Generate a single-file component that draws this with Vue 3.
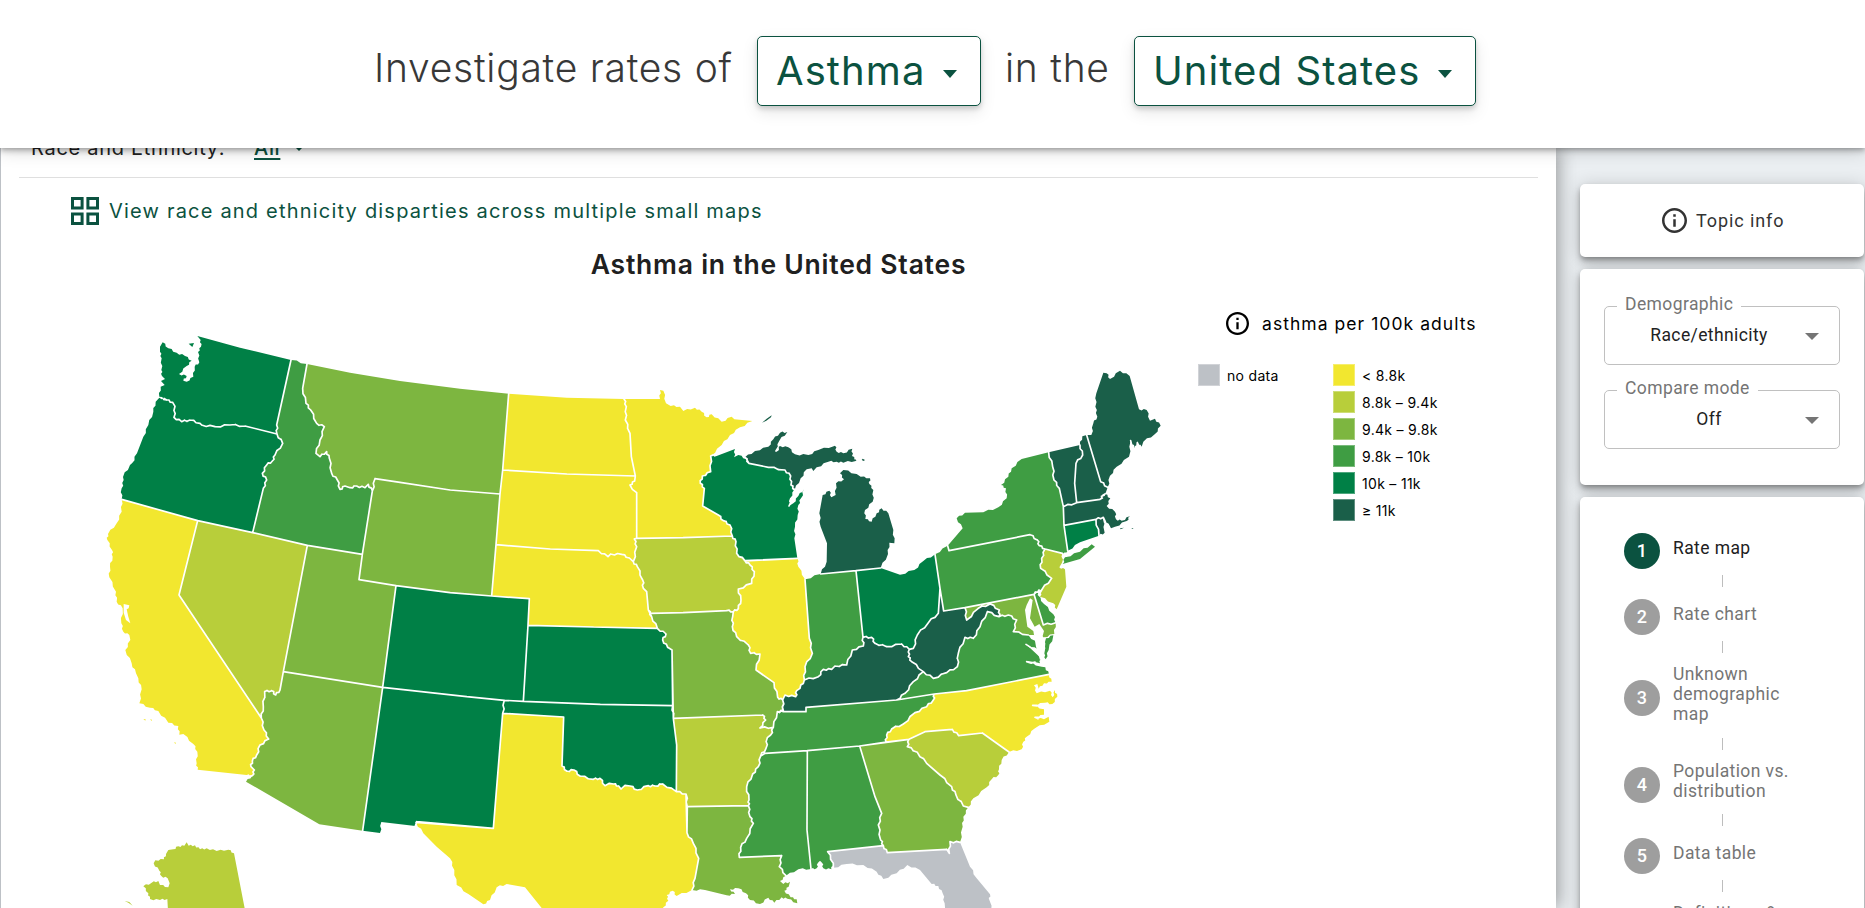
<script setup>
const palette = ['#f2e72f', '#b8ce3a', '#7db640', '#3f9d43', '#008046', '#1a5f49']
const none = '#bdc1c6'

// Outlines use thirds of a pixel as their unit.
const outlines = [
  { id: 'WA', c: 4, d: 'M488 1027 480 1040 480 1055 485 1075 484 1110 486 1128 495 1137 483 1143 494 1155 482 1160 478 1190 500 1200 518 1207 525 1219 522 1252 545 1265 570 1260 600 1270 605 1275 645 1280 690 1275 735 1278 831 1302 830 1275 873 1080 720 1043 592 1008 602 1020 603 1040 594 1056 598 1087 584 1100 580 1130 560 1145 550 1142 560 1128 537 1122 560 1098 575 1082 555 1068 530 1058 505 1045Z' },
  { id: 'OR', c: 4, d: 'M478 1193 500 1200 518 1207 525 1219 522 1252 545 1265 570 1260 600 1270 605 1275 645 1280 690 1275 735 1278 831 1302 848 1330 825 1365 817 1383 800 1395 787 1420 800 1440 790 1465 758 1598 593 1562 365 1498 365 1465 371 1440 369 1431 390 1395 396 1390 411 1360 430 1310 445 1275 460 1235 467 1205Z' },
  { id: 'ID', c: 3, d: 'M873 1080 921 1092 908 1165 918 1210 932 1230 950 1270 973 1280 960 1320 948 1360 960 1370 980 1355 988 1375 995 1420 1012 1440 1020 1468 1035 1458 1050 1463 1070 1458 1095 1463 1105 1453 1117 1473 1087 1663 922 1636 758 1598 790 1465 800 1440 787 1420 800 1395 817 1383 825 1365 848 1330 831 1302 830 1275Z' },
  { id: 'MT', c: 2, d: 'M921 1092 1050 1118 1200 1143 1380 1166 1526 1181 1508 1410 1500 1482 1350 1470 1200 1447 1125 1436 1117 1473 1105 1453 1095 1463 1070 1458 1050 1463 1035 1458 1020 1468 1012 1440 995 1420 988 1375 980 1355 960 1370 948 1360 960 1320 973 1280 950 1270 932 1230 918 1210 908 1165Z' },
  { id: 'WY', c: 2, d: 'M1125 1436 1200 1447 1350 1470 1500 1482 1488 1634 1475 1788 1350 1778 1188 1757 1077 1739 1087 1663 1117 1473Z' },
  { id: 'ND', c: 0, d: 'M1526 1181 1700 1193 1872 1197 1879 1220 1876 1260 1890 1300 1894 1370 1906 1428 1700 1422 1508 1410Z' },
  { id: 'SD', c: 0, d: 'M1508 1410 1700 1422 1906 1428 1904 1443 1890 1455 1897 1468 1910 1478 1910 1615 1903 1617 1910 1640 1900 1685 1888 1674 1865 1663 1832 1662 1824 1670 1795 1652 1650 1647 1488 1634 1500 1482Z' },
  { id: 'NE', c: 0, d: 'M1488 1634 1650 1647 1795 1652 1824 1670 1832 1662 1865 1663 1888 1674 1900 1685 1912 1700 1928 1740 1930 1765 1940 1775 1945 1830 1955 1850 1972 1885 1780 1881 1584 1876 1588 1796 1475 1788Z' },
  { id: 'MN', c: 0, d: 'M1872 1197 1980 1197 1980 1170 1990 1172 1998 1210 2012 1218 2040 1220 2050 1233 2085 1223 2105 1235 2120 1252 2135 1243 2165 1265 2195 1250 2203 1258 2257 1263 2220 1282 2190 1305 2165 1335 2132 1368 2132 1415 2107 1428 2101 1450 2113 1465 2108 1518 2155 1545 2170 1562 2190 1575 2197 1608 2050 1613 1910 1615 1910 1478 1897 1468 1890 1455 1904 1443 1906 1428 1894 1370 1890 1300 1876 1260 1879 1220Z' },
  { id: 'WI', c: 4, d: 'M2132 1368 2150 1368 2205 1347 2202 1372 2215 1365 2240 1378 2247 1390 2305 1402 2355 1410 2372 1428 2373 1455 2384 1468 2370 1495 2367 1518 2380 1510 2395 1488 2413 1466 2403 1495 2395 1515 2393 1545 2385 1580 2383 1615 2392 1675 2235 1683 2210 1660 2208 1625 2197 1608 2190 1575 2170 1562 2155 1545 2108 1518 2113 1465 2101 1450 2107 1428 2132 1415Z' },
  { id: 'MI', c: 5, d: 'M2235 1372 2265 1353 2305 1340 2320 1318 2340 1298 2362 1296 2338 1322 2328 1353 2340 1338 2365 1342 2385 1363 2425 1365 2455 1350 2505 1337 2510 1355 2530 1360 2557 1346 2556 1368 2570 1382 2530 1388 2510 1385 2485 1385 2450 1402 2440 1413 2435 1405 2420 1408 2402 1435 2384 1470 2373 1455 2372 1428 2355 1410 2305 1402 2247 1390Z' },
  { id: 'MI', c: 5, d: 'M2530 1410 2570 1422 2582 1430 2610 1435 2608 1452 2620 1470 2618 1505 2595 1530 2596 1557 2615 1565 2630 1540 2645 1525 2665 1540 2680 1590 2683 1630 2668 1628 2664 1662 2642 1704 2568 1712 2462 1722 2480 1685 2481 1630 2462 1580 2458 1540 2468 1485 2488 1472 2494 1492 2507 1485 2508 1450 2532 1438 2520 1420Z' },
  { id: 'IA', c: 1, d: 'M1910 1615 2050 1613 2197 1608 2208 1625 2210 1660 2235 1682 2250 1695 2263 1715 2255 1750 2215 1767 2223 1800 2215 1826 2200 1835 2180 1832 2050 1838 1950 1840 1945 1830 1940 1775 1930 1765 1928 1740 1912 1700 1900 1685 1910 1640 1903 1617Z' },
  { id: 'IL', c: 0, d: 'M2235 1682 2392 1675 2395 1700 2415 1738 2428 1915 2437 1960 2415 2000 2413 2040 2400 2065 2390 2072 2387 2090 2355 2085 2348 2100 2333 2092 2322 2048 2268 2010 2280 1962 2252 1960 2245 1935 2210 1910 2197 1880 2198 1850 2200 1835 2215 1826 2223 1800 2215 1767 2255 1750 2263 1715 2250 1695Z' },
  { id: 'MO', c: 2, d: 'M1950 1840 2050 1838 2180 1832 2200 1835 2198 1850 2197 1880 2210 1910 2245 1935 2252 1960 2280 1962 2268 2010 2322 2048 2333 2092 2348 2100 2350 2132 2332 2135 2320 2182 2280 2184 2297 2160 2288 2145 2020 2155 2016 1950 2003 1942 1988 1920 1998 1902 1972 1885 1955 1850Z' },
  { id: 'KS', c: 4, d: 'M1584 1876 1780 1881 1972 1885 1998 1902 1988 1920 2003 1942 2016 1950 2018 2117 1800 2113 1570 2104Z' },
  { id: 'CO', c: 4, d: 'M1188 1757 1350 1778 1475 1788 1588 1796 1584 1876 1570 2104 1513 2101 1400 2090 1148 2062Z' },
  { id: 'UT', c: 2, d: 'M922 1636 1087 1663 1077 1739 1188 1757 1148 2062 850 2015Z' },
  { id: 'NV', c: 1, d: 'M593 1562 758 1598 922 1636 850 2015 840 2070 827 2085 815 2072 794 2075 790 2120 784 2154 537 1785Z' },
  { id: 'CA', c: 0, d: 'M365 1498 593 1562 537 1785 784 2154 792 2190 806 2217 780 2235 770 2265 757 2283 753 2300 763 2310 757 2327 740 2325 593 2309 590 2290 592 2255 580 2232 550 2202 538 2204 535 2178 505 2168 475 2133 450 2123 418 2110 425 2068 415 2035 408 2020 395 1990 376 1950 391 1920 388 1905 370 1895 364 1870 368 1825 350 1805 348 1775 328 1732 330 1700 338 1670 336 1650 322 1620 324 1602 350 1570 365 1535Z' },
  { id: 'AZ', c: 2, d: 'M850 2015 1148 2062 1088 2492 958 2473 738 2345 757 2327 763 2310 753 2300 757 2283 770 2265 780 2235 806 2217 792 2190 784 2154 790 2120 794 2075 815 2072 827 2085 840 2070Z' },
  { id: 'NM', c: 4, d: 'M1148 2062 1400 2090 1513 2101 1508 2140 1480 2485 1250 2465 1246 2478 1144 2466 1140 2499 1088 2492Z' },
  { id: 'OK', c: 4, d: 'M1513 2101 1570 2104 1800 2113 2018 2117 2020 2155 2030 2235 2029 2375 1988 2352 1965 2358 1945 2357 1912 2370 1890 2358 1875 2356 1863 2367 1856 2358 1840 2352 1828 2350 1815 2357 1800 2335 1780 2338 1740 2328 1722 2310 1700 2313 1686 2298 1691 2151 1508 2140Z' },
  { id: 'TX', c: 0, d: 'M1508 2140 1691 2151 1686 2298 1700 2313 1722 2310 1740 2328 1780 2338 1800 2335 1815 2357 1828 2350 1840 2352 1856 2358 1863 2367 1875 2356 1890 2358 1912 2370 1945 2357 1965 2358 1988 2352 2029 2375 2058 2382 2061 2498 2080 2530 2096 2575 2085 2635 2076 2670 2030 2688 2018 2672 2000 2685 2005 2702 1990 2722 1985 2750 1640 2750 1625 2724 1575 2662 1520 2652 1490 2662 1470 2700 1450 2713 1405 2682 1370 2655 1363 2610 1350 2575 1310 2540 1270 2500 1248 2467 1480 2485Z' },
  { id: 'AR', c: 1, d: 'M2020 2155 2288 2145 2297 2160 2280 2184 2320 2182 2312 2205 2302 2213 2298 2245 2282 2268 2275 2300 2258 2322 2240 2360 2247 2400 2245 2417 2062 2420 2058 2382 2029 2375 2030 2235Z' },
  { id: 'LA', c: 2, d: 'M2062 2420 2245 2417 2250 2450 2260 2470 2240 2515 2222 2542 2218 2572 2345 2567 2338 2600 2358 2627 2340 2643 2350 2652 2370 2645 2366 2660 2353 2672 2372 2692 2390 2698 2392 2710 2362 2696 2345 2692 2323 2708 2305 2693 2280 2712 2250 2700 2238 2680 2215 2665 2190 2668 2205 2682 2180 2686 2115 2670 2076 2670 2085 2635 2096 2575 2080 2530 2061 2498Z' },
  { id: 'MS', c: 3, d: 'M2295 2260 2422 2252 2421 2490 2433 2607 2395 2608 2358 2627 2338 2600 2345 2567 2218 2572 2222 2542 2240 2515 2260 2470 2250 2450 2245 2417 2247 2400 2240 2360 2258 2322 2275 2300 2282 2268Z' },
  { id: 'AL', c: 3, d: 'M2422 2252 2579 2238 2625 2390 2645 2440 2635 2475 2642 2520 2650 2537 2483 2555 2500 2590 2494 2608 2470 2605 2466 2588 2460 2582 2454 2588 2450 2605 2433 2607 2421 2490Z' },
  { id: 'GA', c: 2, d: 'M2579 2238 2727 2218 2722 2240 2752 2257 2780 2290 2820 2325 2855 2360 2868 2385 2890 2418 2905 2422 2890 2450 2888 2480 2880 2527 2850 2525 2848 2560 2840 2548 2662 2558 2650 2537 2642 2520 2635 2475 2645 2440 2625 2390Z' },
  { id: 'FL', c: -1, d: 'M2483 2555 2650 2537 2662 2558 2840 2548 2848 2560 2850 2525 2880 2527 2910 2600 2930 2635 2970 2683 2968 2700 2980 2750 2832 2750 2834 2710 2828 2680 2815 2658 2795 2652 2760 2610 2722 2595 2690 2620 2650 2637 2630 2615 2590 2595 2540 2592 2500 2603 2500 2590Z' },
  { id: 'SC', c: 1, d: 'M2727 2218 2775 2195 2857 2188 2876 2207 2947 2199 3027 2256 3005 2280 2997 2308 2995 2325 2975 2338 2960 2362 2920 2395 2905 2422 2890 2418 2868 2385 2855 2360 2820 2325 2780 2290 2752 2257 2722 2240Z' },
  { id: 'NC', c: 0, d: 'M3147 2023 2900 2072 2803 2082 2800 2100 2780 2120 2745 2138 2710 2172 2675 2187 2660 2205 2658 2226 2727 2218 2775 2195 2857 2188 2876 2207 2947 2199 3027 2256 3065 2248 3070 2225 3080 2210 3105 2185 3148 2165 3146 2150 3132 2158 3105 2152 3132 2144 3132 2128 3098 2116 3135 2108 3157 2112 3172 2090 3165 2070 3158 2092 3150 2072 3110 2080 3102 2056 3112 2052 3116 2066 3132 2050 3155 2045Z' },
  { id: 'TN', c: 3, d: 'M2350 2135 2418 2135 2418 2122 2690 2100 2803 2082 2800 2100 2780 2120 2745 2138 2710 2172 2675 2187 2660 2205 2658 2226 2579 2238 2422 2252 2295 2260 2282 2268 2298 2245 2302 2213 2312 2205 2320 2182 2332 2135Z' },
  { id: 'VA', c: 3, d: 'M2690 2100 2715 2080 2740 2045 2770 2015 2800 2035 2840 2018 2872 2000 2875 1960 2895 1912 2920 1915 2940 1880 2962 1835 2997 1850 3025 1845 3050 1860 3040 1895 3085 1905 3115 1935 3118 1950 3078 1933 3120 1972 3120 1990 3080 1985 3125 2000 3136 2002 3147 2023 2900 2072 2803 2082Z' },
  { id: 'VA', c: 3, d: 'M3138 1915 3160 1906 3146 1950 3137 1978 3131 1960Z' },
  { id: 'KY', c: 5, d: 'M2350 2135 2348 2100 2355 2085 2387 2090 2390 2072 2400 2065 2413 2040 2455 2030 2470 2008 2495 2008 2505 1998 2540 1995 2557 1950 2590 1938 2589 1912 2615 1912 2625 1930 2660 1940 2705 1932 2728 1948 2725 1970 2735 1985 2770 2015 2740 2045 2715 2080 2690 2100 2418 2122 2418 2135Z' },
  { id: 'IN', c: 3, d: 'M2415 1738 2462 1722 2568 1712 2589 1912 2590 1938 2557 1950 2540 1995 2505 1998 2495 2008 2470 2008 2455 2030 2413 2040 2415 2000 2437 1960 2428 1915Z' },
  { id: 'OH', c: 4, d: 'M2568 1712 2642 1704 2700 1724 2743 1710 2770 1683 2805 1663 2820 1765 2815 1840 2785 1868 2752 1905 2740 1945 2728 1948 2705 1932 2660 1940 2625 1930 2615 1912 2589 1912Z' },
  { id: 'WV', c: 5, d: 'M2820 1765 2831 1833 2895 1823 2900 1860 2935 1825 2970 1812 2998 1830 2997 1850 2962 1835 2940 1880 2920 1915 2895 1912 2875 1960 2872 2000 2840 2018 2800 2035 2770 2015 2735 1985 2725 1970 2728 1948 2740 1945 2752 1905 2785 1868 2815 1840Z' },
  { id: 'PA', c: 3, d: 'M2805 1663 2843 1637 2847 1652 3090 1604 3112 1620 3118 1637 3135 1647 3125 1675 3122 1705 3155 1735 3125 1770 3102 1783 2895 1823 2831 1833 2820 1765Z' },
  { id: 'NY', c: 3, d: 'M2843 1637 2888 1585 2870 1555 2895 1538 2950 1537 2995 1522 3020 1495 3018 1465 3003 1455 3025 1430 3035 1405 3065 1377 3146 1357 3158 1400 3162 1440 3178 1465 3190 1520 3192 1576 3203 1652 3190 1663 3187 1660 3135 1647 3118 1637 3112 1620 3090 1604 2847 1652Z' },
  { id: 'NY', c: 3, d: 'M3188 1692 3195 1672 3240 1655 3275 1633 3285 1640 3240 1677Z' },
  { id: 'MD', c: 2, d: 'M2895 1823 3102 1783 3130 1875 3167 1868 3163 1902 3130 1912 3085 1905 3040 1895 3050 1860 3025 1845 2997 1850 2998 1830 2970 1812 2935 1825 2900 1860Z' },
  { id: 'DE', c: 3, d: 'M3102 1783 3117 1770 3113 1785 3132 1812 3160 1843 3167 1868 3130 1875Z' },
  { id: 'NJ', c: 1, d: 'M3135 1647 3187 1660 3186 1688 3178 1702 3195 1708 3199 1760 3170 1828 3160 1810 3120 1790 3125 1770 3155 1735 3122 1705 3125 1675Z' },
  { id: 'VT', c: 5, d: 'M3146 1357 3240 1335 3248 1365 3228 1390 3224 1450 3230 1508 3190 1520 3178 1465 3162 1440 3158 1400Z' },
  { id: 'NH', c: 5, d: 'M3240 1335 3247 1309 3260 1305 3302 1445 3323 1462 3318 1476 3300 1498 3230 1508 3224 1450 3228 1390 3248 1365Z' },
  { id: 'ME', c: 5, d: 'M3260 1305 3274 1305 3280 1270 3292 1250 3286 1220 3289 1180 3310 1118 3320 1120 3330 1137 3360 1112 3389 1128 3417 1228 3440 1230 3450 1262 3465 1256 3482 1277 3465 1302 3430 1325 3425 1340 3412 1328 3405 1345 3392 1322 3387 1370 3350 1400 3330 1427 3323 1462 3302 1445Z' },
  { id: 'MA', c: 5, d: 'M3190 1520 3230 1508 3300 1498 3315 1482 3331 1495 3320 1518 3345 1535 3348 1558 3365 1562 3390 1549 3380 1563 3345 1580 3333 1585 3310 1552 3288 1558 3192 1576Z' },
  { id: 'RI', c: 5, d: 'M3288 1558 3310 1552 3314 1598 3297 1607Z' },
  { id: 'CT', c: 4, d: 'M3192 1576 3288 1558 3297 1607 3240 1627 3203 1652Z' },
  { id: 'AK', c: 1, d: 'M505 2550 520 2548 535 2539 553 2537 560 2527 566 2537 585 2536 600 2548 620 2545 650 2553 685 2549 702 2560 735 2730 735 2750 505 2750 502 2697 480 2700 450 2697 445 2680 430 2659 455 2648 475 2643 480 2655 505 2662 509 2650 503 2635 484 2628 478 2612 461 2590 466 2581 492 2578 498 2562Z' }
]

const islets = [
  [5, 'M2286 1268 2300 1256 2315 1246 2313 1252 2299 1262ZM2585 1380 2588 1376 2595 1380 2591 1383ZM2561 1380 2567 1378 2568 1383ZM3360 1585 3372 1583 3362 1588ZM3395 1584 3401 1585 3396 1587Z'],
  [4, 'M566 1031 582 1029 577 1041Z'],
  [1, 'M374 2703 388 2706 398 2717 385 2708Z'],
  [0, 'M430 2157 437 2158 436 2162ZM450 2158 456 2159 455 2163ZM522 2227 528 2228 526 2232Z']
]
const water = 'M3090 1795 3080 1815 3075 1830 3082 1880 3100 1893 3108 1940 3120 1980 3132 1975 3136 1930 3128 1908 3132 1893 3118 1872 3104 1880 3090 1855 3098 1800ZM371 1812 388 1816 386 1825 380 1828 385 1850 391 1870 378 1860 371 1838Z'

const parse = (d) => {
  const n = d.match(/\d+/g).map(Number)
  const out = []
  for (let i = 0; i < n.length; i += 2) out.push([n[i], n[i + 1]])
  return out
}

const kink = (a, b) => {
  const [p, q] = a[0] < b[0] || (a[0] === b[0] && a[1] < b[1]) ? [a, b] : [b, a]
  const dx = q[0] - p[0]
  const dy = q[1] - p[1]
  const len = Math.hypot(dx, dy)
  if (len < 17 || len > 52) return []
  const at = (t, h) => [p[0] + dx * t - (dy / len) * h, p[1] + dy * t + (dx / len) * h]
  const s = (p[0] * 7 + p[1] * 13 + q[0] * 3) % 2 ? 2.6 : -2.6
  const pts = [at(0.35, s), at(0.62, -s * 0.8)]
  return p === a ? pts : pts.reverse()
}

const states = outlines.map((s) => {
  const pts = parse(s.d)
  const ring = pts.flatMap((p, i) => [p, ...kink(p, pts[(i + 1) % pts.length])])
  return { ...s, ring, path: 'M' + ring.map((p) => p[0].toFixed(1) + ' ' + p[1].toFixed(1)).join(' ') + 'Z' }
})

const inside = (x, y, ring) => {
  let hit = false
  for (let i = 0, j = ring.length - 1; i < ring.length; j = i++) {
    const [xi, yi] = ring[i]
    const [xj, yj] = ring[j]
    if (yi > y !== yj > y && x < ((xj - xi) * (y - yi)) / (yj - yi) + xi) hit = !hit
  }
  return hit
}
const land = (x, y) => states.some((s) => inside(x, y, s.ring))

// A border is any edge with land on both of its sides.
const borders = states.map(({ ring }) => ring.map((a, i) => {
  const b = ring[(i + 1) % ring.length]
  const dx = b[0] - a[0]
  const dy = b[1] - a[1]
  const len = Math.hypot(dx, dy) || 1
  const mx = (a[0] + b[0]) / 2
  const my = (a[1] + b[1]) / 2
  const ox = (-dy / len) * 3.5
  const oy = (dx / len) * 3.5
  return land(mx + ox, my + oy) && land(mx - ox, my - oy) ? `M${a[0]} ${a[1]}L${b[0]} ${b[1]}` : ''
}).join('')).join('')

const legend = ['< 8.8k', '8.8k – 9.4k', '9.4k – 9.8k', '9.8k – 10k', '10k – 11k', '≥ 11k']
const steps = [
  ['Rate map'],
  ['Rate chart'],
  ['Unknown', 'demographic', 'map'],
  ['Population vs.', 'distribution'],
  ['Data table'],
  ['Definitions &', 'missing data']
]
const selects = [['Demographic', 'Race/ethnicity'], ['Compare mode', 'Off']]
</script>

<template>
  <div class="page">
    <header class="madlib">
      <span class="phrase first">Investigate rates of</span>
      <button class="pick topic"><span>Asthma</span><i class="caret"></i></button>
      <span class="phrase second">in the</span>
      <button class="pick place"><span>United States</span><i class="caret"></i></button>
    </header>
    <div class="body">
      <main class="card-main">
        <div class="filter"><span class="filter-name">Race and Ethnicity:</span><a class="filter-value">All</a><i class="caret small"></i></div>
        <div class="multi">
          <svg class="grid-icon" viewBox="0 0 28 28"><path d="M1.5 1.5h9.6v9.6H1.5zM16.9 1.5h9.6v9.6h-9.6zM1.5 16.9h9.6v9.6H1.5zM16.9 16.9h9.6v9.6h-9.6z" fill="none" stroke="#0b5240" stroke-width="3" /></svg>
          <span>View race and ethnicity disparties across multiple small maps</span>
        </div>
        <h3 class="title">Asthma in the United States</h3>
        <div class="figure">
          <svg class="map" viewBox="270 900 3240 1824">
            <path v-for="(s, i) in states" :key="i" :d="s.path" :fill="s.c < 0 ? none : palette[s.c]" />
            <path :d="borders" fill="none" stroke="#fff" stroke-width="5" stroke-linecap="round" />
            <path :d="water" fill="#fff" />
            <path v-for="[c, d] in islets" :key="d" :d="d" :fill="palette[c]" />
          </svg>
          <div class="legend">
            <div class="legend-title">
              <svg class="info" viewBox="2 2 20 20"><path d="M11 7h2v2h-2zm0 4h2v6h-2zm1-9C6.48 2 2 6.48 2 12s4.48 10 10 10 10-4.48 10-10S17.52 2 12 2zm0 18c-4.41 0-8-3.59-8-8s3.59-8 8-8 8 3.59 8 8-3.59 8-8 8z" /></svg>
              <span>asthma per 100k adults</span>
            </div>
            <div class="keys">
              <div class="key-col"><div class="key"><i class="sw none"></i><span>no data</span></div></div>
              <div class="key-col">
                <div v-for="(l, i) in legend" :key="l" class="key"><i class="sw" :style="{ background: palette[i] }"></i><span>{{ l }}</span></div>
              </div>
            </div>
          </div>
        </div>
      </main>
      <aside class="side">
        <section class="card topic-info">
          <svg class="info" viewBox="2 2 20 20"><path d="M11 7h2v2h-2zm0 4h2v6h-2zm1-9C6.48 2 2 6.48 2 12s4.48 10 10 10 10-4.48 10-10S17.52 2 12 2zm0 18c-4.41 0-8-3.59-8-8s3.59-8 8-8 8 3.59 8 8-3.59 8-8 8z" /></svg>
          <span>Topic info</span>
        </section>
        <section class="card options">
          <div v-for="s in selects" :key="s[0]" class="field">
            <label>{{ s[0] }}</label>
            <span class="val">{{ s[1] }}</span><i class="tri"></i>
          </div>
        </section>
        <section class="card steps">
          <template v-for="(s, i) in steps" :key="i">
            <div v-if="i" class="line"></div>
            <div class="step" :class="{ on: i === 0 }">
              <span class="num">{{ i + 1 }}</span>
              <span class="label"><span v-for="t in s" :key="t">{{ t }}</span></span>
            </div>
          </template>
        </section>
      </aside>
    </div>
  </div>
</template>

<style>
html, body { overflow: hidden; }
</style>

<style scoped>
.page { width: 1865px; height: 908px; overflow: hidden; background: #ebeff2; font-family: Inter, "Liberation Sans", sans-serif; display: flex; flex-direction: column; }
.page * { box-sizing: border-box; }
.madlib { position: relative; z-index: 3; flex: none; height: 148px; background: #fff; padding: 36px 0 0 374px; display: flex; align-items: flex-start; box-shadow: 0 2px 4px -1px rgba(0,0,0,.2), 0 4px 5px rgba(0,0,0,.14), 0 1px 18px rgba(0,0,0,.2); }
.phrase { font-size: 39px; font-weight: 300; line-height: 64px; color: #383838; white-space: nowrap; letter-spacing: .75px; }
.first { width: 383px; }
.second { width: 129px; margin-left: 24px; }
.pick { height: 70px; border: 1px solid #0b5240; border-radius: 5px; background: #fff; color: #0b5240; font: 400 40px/68px Inter, sans-serif; letter-spacing: 1.08px; padding: 0 0 0 18px; display: flex; align-items: center; white-space: nowrap; box-shadow: 0 3px 5px rgba(0,0,0,.16), 0 6px 16px rgba(0,0,0,.1); }
.topic { width: 224px; }
.place { width: 342px; }
.topic span { width: 167px; text-align: left; }
.place span { width: 285px; text-align: left; }
.caret { border: 7px solid transparent; border-top: 8px solid #0b5240; border-bottom: 0; margin-top: 6px; }
.body { flex: none; height: 760px; display: flex; }
.card-main { width: 1556px; height: 760px; background: #fff; border-left: 1px solid #bdc1c6; box-shadow: 2px 0 18px rgba(0,0,0,.38); position: relative; z-index: 2; overflow: hidden; padding: 0 18px; }
.filter { height: 30px; margin-top: 0; border-bottom: 1px solid #dfdfdf; display: flex; align-items: flex-start; font-size: 20px; letter-spacing: .7px; padding-left: 12px; white-space: nowrap; color: #222; line-height: 24px; }
.filter > * { transform: translateY(-12px); }
.filter-name { width: 223px; }
.filter-value { width: 40px; color: #0b5240; font-weight: 500; text-decoration: underline; text-decoration-thickness: 2px; text-underline-offset: 3px; }
.caret.small { border-width: 5px 5px 0; margin-top: 10px; }
.multi { display: flex; align-items: center; height: 28px; margin: 19px 0 0 52px; color: #0b5240; font-size: 20px; letter-spacing: 1.2px; white-space: nowrap; }
.multi svg { width: 28px; height: 28px; margin-right: 10px; }
.title { margin: 23px 0 0; height: 32px; line-height: 32px; text-align: center; font-size: 26.5px; font-weight: 600; color: #202020; letter-spacing: .77px; }
.figure { display: flex; margin-top: 20px; margin-left: 71px; }
.map { width: 1080px; height: 608px; flex: none; }
.legend { margin-left: 28px; width: 300px; }
.legend-title { display: flex; align-items: center; height: 24px; margin: 11px 0 0 28px; font-size: 17.5px; letter-spacing: 1.05px; color: #000; white-space: nowrap; }
.legend-title .info { width: 23px; height: 23px; margin-right: 13px; }
.keys { display: flex; margin-top: 29px; }
.key-col { width: 135px; }
.key { display: flex; align-items: center; height: 22px; margin-bottom: 5px; font-size: 14px; letter-spacing: .3px; white-space: nowrap; }
.sw { width: 22px; height: 22px; margin-right: 7px; border: 1px solid rgba(255,255,255,.3); }
.sw.none { background: #bdc1c6; }
.side { width: 309px; padding: 36px 1px 0 24px; font-family: Roboto, sans-serif; }
.card { width: 284px; background: #fff; border-radius: 5px; margin-bottom: 12px; box-shadow: 0 3px 5px -1px rgba(0,0,0,.3), 0 6px 10px rgba(0,0,0,.18), 0 1px 18px rgba(0,0,0,.16); }
.topic-info { height: 73px; display: flex; align-items: center; padding: 0 0 0 82px; font-size: 18px; letter-spacing: .9px; color: #333; fill: #333; white-space: nowrap; }
.topic-info svg { width: 25px; height: 25px; margin-right: 9px; }
.options { height: 216px; padding: 37px 24px 0; }
.field { position: relative; height: 59px; border: 1px solid #c0c0c0; border-radius: 5px; margin-bottom: 25px; display: flex; color: #222; font-size: 17.5px; line-height: 20px; }
.field label { position: absolute; left: 12px; top: -13px; padding: 0 8px; background: #fff; color: #757575; font-size: 17.5px; letter-spacing: .4px; white-space: nowrap; }
.val { width: 208px; text-align: center; padding-top: 18px; letter-spacing: .4px; }
.tri { position: absolute; left: 200px; top: 26px; border: 7px solid transparent; border-top-color: #757575; border-bottom: 0; }
.steps { height: 600px; padding: 35px 0 0 44px; margin: 0; }
.step { display: flex; align-items: center; min-height: 38px; color: #757575; font-size: 17.5px; letter-spacing: .4px; }
.num { flex: none; width: 36px; height: 36px; border-radius: 50%; background: #9e9e9e; color: #fff; text-align: center; font-weight: 500; font-size: 18px; line-height: 36px; margin-right: 13px; }
.label { display: flex; flex-direction: column; line-height: 20px; padding: 0 0 8.5px; white-space: nowrap; }
.label span:only-child { padding-top: 3px; }
.on { color: #212121; }
.on .num { background: #0b5240; }
.line { width: 1px; height: 12px; margin: 5px 0 11px 98px; background: #bdbdbd; }
</style>
